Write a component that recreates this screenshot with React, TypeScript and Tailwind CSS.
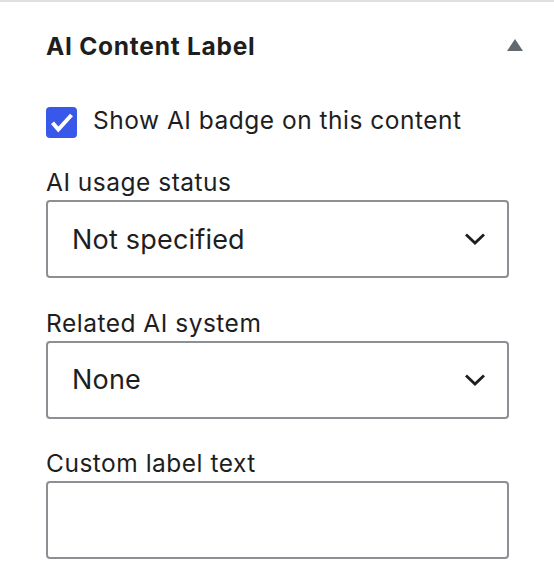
import React from "react";

function Chevron() {
  return (
    <svg width="22" height="14" viewBox="0 0 22 14" className="shrink-0">
      <path d="M2 2.5 L11 11 L20 2.5" fill="none" stroke="#1e1e1e" strokeWidth="2.8" strokeLinecap="butt" strokeLinejoin="miter" />
    </svg>
  );
}

function SelectBox({ value }: { value: string }) {
  return (
    <div className="flex h-[78px] w-full items-center justify-between rounded-[4px] border-2 border-[#8c8f94] bg-white pl-[24px] pr-[21px]">
      <span className="text-[27px] leading-none tracking-[0.2px] text-[#1e1e1e]">{value}</span>
      <Chevron />
    </div>
  );
}

function Field({ label, children }: { label: string; children: React.ReactNode }) {
  return (
    <div className="flex flex-col">
      <label className="mb-[2px] block text-[24.5px] leading-[32px] tracking-[0.5px] text-[#1e1e1e]">{label}</label>
      {children}
    </div>
  );
}

export default function App() {
  return (
    <div
      className="h-[586px] w-[554px] overflow-hidden border-t-2 border-[#e0e0e0] bg-white"
      style={{ fontFamily: "Inter, 'Noto Sans', sans-serif" }}
    >
      <div className="flex h-[60px] items-end justify-between pl-[46px] pr-[31px]">
        <h2 className="text-[24.5px] font-bold leading-[32px] tracking-[0.75px] text-[#1e1e1e]">AI Content Label</h2>
        <svg width="16" height="12" viewBox="0 0 16 12" className="mb-[11px]">
          <path d="M8 0 L16 12 L0 12 Z" fill="#646970" />
        </svg>
      </div>
      <div className="flex flex-col pl-[46px] pr-[45px]">
        <div className="mt-[42px] flex h-[32px] items-start gap-[16px]">
          <span className="mt-[3px] flex h-[31px] w-[31px] shrink-0 items-center justify-center rounded-[4px] bg-[#3858e9]">
            <svg width="31" height="31" viewBox="0 0 31 31">
              <path d="M6.5 15.8 L12.3 22.5 L25.5 8" fill="none" stroke="#fff" strokeWidth="4" strokeLinecap="butt" strokeLinejoin="miter" />
            </svg>
          </span>
          <span className="text-[24.5px] leading-[32px] tracking-[0.5px] text-[#1e1e1e]">Show AI badge on this content</span>
        </div>
        <div className="mt-[30px] flex flex-col gap-[28.5px]">
          <Field label="AI usage status">
            <SelectBox value="Not specified" />
          </Field>
          <Field label="Related AI system">
            <SelectBox value="None" />
          </Field>
          <Field label="Custom label text">
            <div className="h-[78px] w-full rounded-[4px] border-2 border-[#8c8f94] bg-white" />
          </Field>
        </div>
      </div>
    </div>
  );
}
